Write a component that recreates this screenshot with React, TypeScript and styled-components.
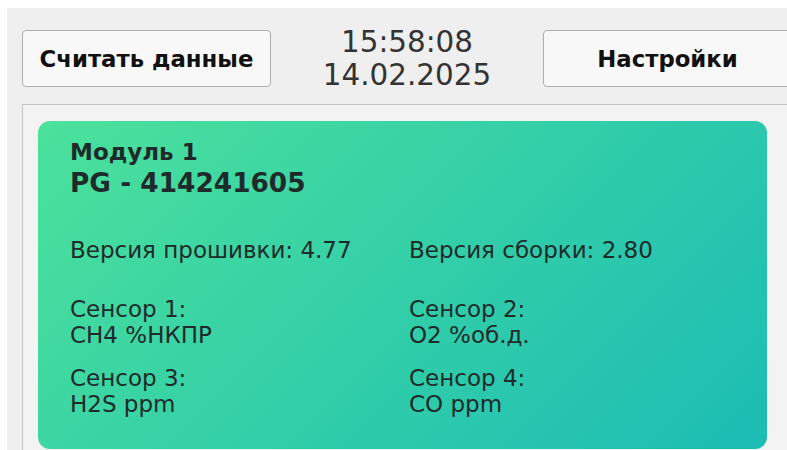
import styled, { createGlobalStyle } from 'styled-components';

const GlobalStyle = createGlobalStyle`
  html, body {
    margin: 0;
    padding: 0;
    background: #ffffff;
  }
  body {
    font-family: 'DejaVu Sans', 'Liberation Sans', sans-serif;
  }
`;

interface SensorInfo {
  title: string;
  gas: string;
}

const sensors: SensorInfo[] = [
  { title: 'Сенсор 1:', gas: 'CH4 %НКПР' },
  { title: 'Сенсор 2:', gas: 'O2 %об.д.' },
  { title: 'Сенсор 3:', gas: 'H2S ppm' },
  { title: 'Сенсор 4:', gas: 'CO ppm' },
];

export default function App() {
  return (
    <>
      <GlobalStyle />
      <ScPage>
        <ScScreen>
          <ScTopBar>
            <ScButton type="button">Считать данные</ScButton>
            <ScClock>
              <span>15:58:08</span>
              <span>14.02.2025</span>
            </ScClock>
            <ScButton type="button">Настройки</ScButton>
          </ScTopBar>

          <ScPanel>
            <ScCard>
              <ScModule>Модуль 1</ScModule>
              <ScSerial>PG - 414241605</ScSerial>

              <ScVersions>
                <ScLine>Версия прошивки: 4.77</ScLine>
                <ScLine>Версия сборки: 2.80</ScLine>
              </ScVersions>

              <ScSensors>
                {sensors.map(s => (
                  <div key={s.title}>
                    <ScLine>{s.title}</ScLine>
                    <ScLine>{s.gas}</ScLine>
                  </div>
                ))}
              </ScSensors>
            </ScCard>
          </ScPanel>
        </ScScreen>
      </ScPage>
    </>
  );
}

const ScPage = styled.div`
  height: 100vh;
  padding: 8px 0 0 7px;
  box-sizing: border-box;
  overflow: hidden;
`;

const ScScreen = styled.div`
  width: 900px;
  height: 100%;
  padding: 22px 0 0 15px;
  box-sizing: border-box;
  background: #efefef;
`;

const ScTopBar = styled.div`
  display: flex;
  align-items: center;
  height: 57px;
`;

const ScButton = styled.button`
  width: 249px;
  height: 57px;
  flex-shrink: 0;
  margin: 0;
  padding: 0;
  border: 1px solid #aeaeae;
  border-radius: 4px;
  background: #f8f8f8;
  color: #111;
  font: bold 22.8px 'DejaVu Sans', 'Liberation Sans', sans-serif;
`;

const ScClock = styled.div`
  width: 272px;
  flex-shrink: 0;
  display: flex;
  flex-direction: column;
  align-items: center;
  color: #333;
  font-size: 29.4px;
  line-height: 33px;
`;

const ScPanel = styled.div`
  margin-top: 17px;
  width: 900px;
  height: 400px;
  padding: 16px 15px;
  box-sizing: border-box;
  border: 1px solid #c4c4c4;
  border-right: none;
  background: #f3f3f3;
`;

const ScCard = styled.div`
  width: 729px;
  height: 328px;
  padding: 18px 32px 0;
  box-sizing: border-box;
  border-radius: 12px;
  background: linear-gradient(135deg, #4ce19b 0%, #33cfa8 50%, #1cbcb5 100%);
  color: #1f2a2a;
`;

const ScModule = styled.div`
  font-weight: bold;
  font-size: 23px;
  line-height: 26px;
`;

const ScSerial = styled.div`
  margin-top: 3px;
  font-weight: bold;
  font-size: 26.4px;
  line-height: 30px;
`;

const ScVersions = styled.div`
  display: grid;
  grid-template-columns: 339px 1fr;
  margin-top: 39px;
`;

const ScSensors = styled.div`
  display: grid;
  grid-template-columns: 339px 1fr;
  row-gap: 17px;
  margin-top: 33px;
`;

const ScLine = styled.div`
  font-size: 23px;
  line-height: 26px;
`;
